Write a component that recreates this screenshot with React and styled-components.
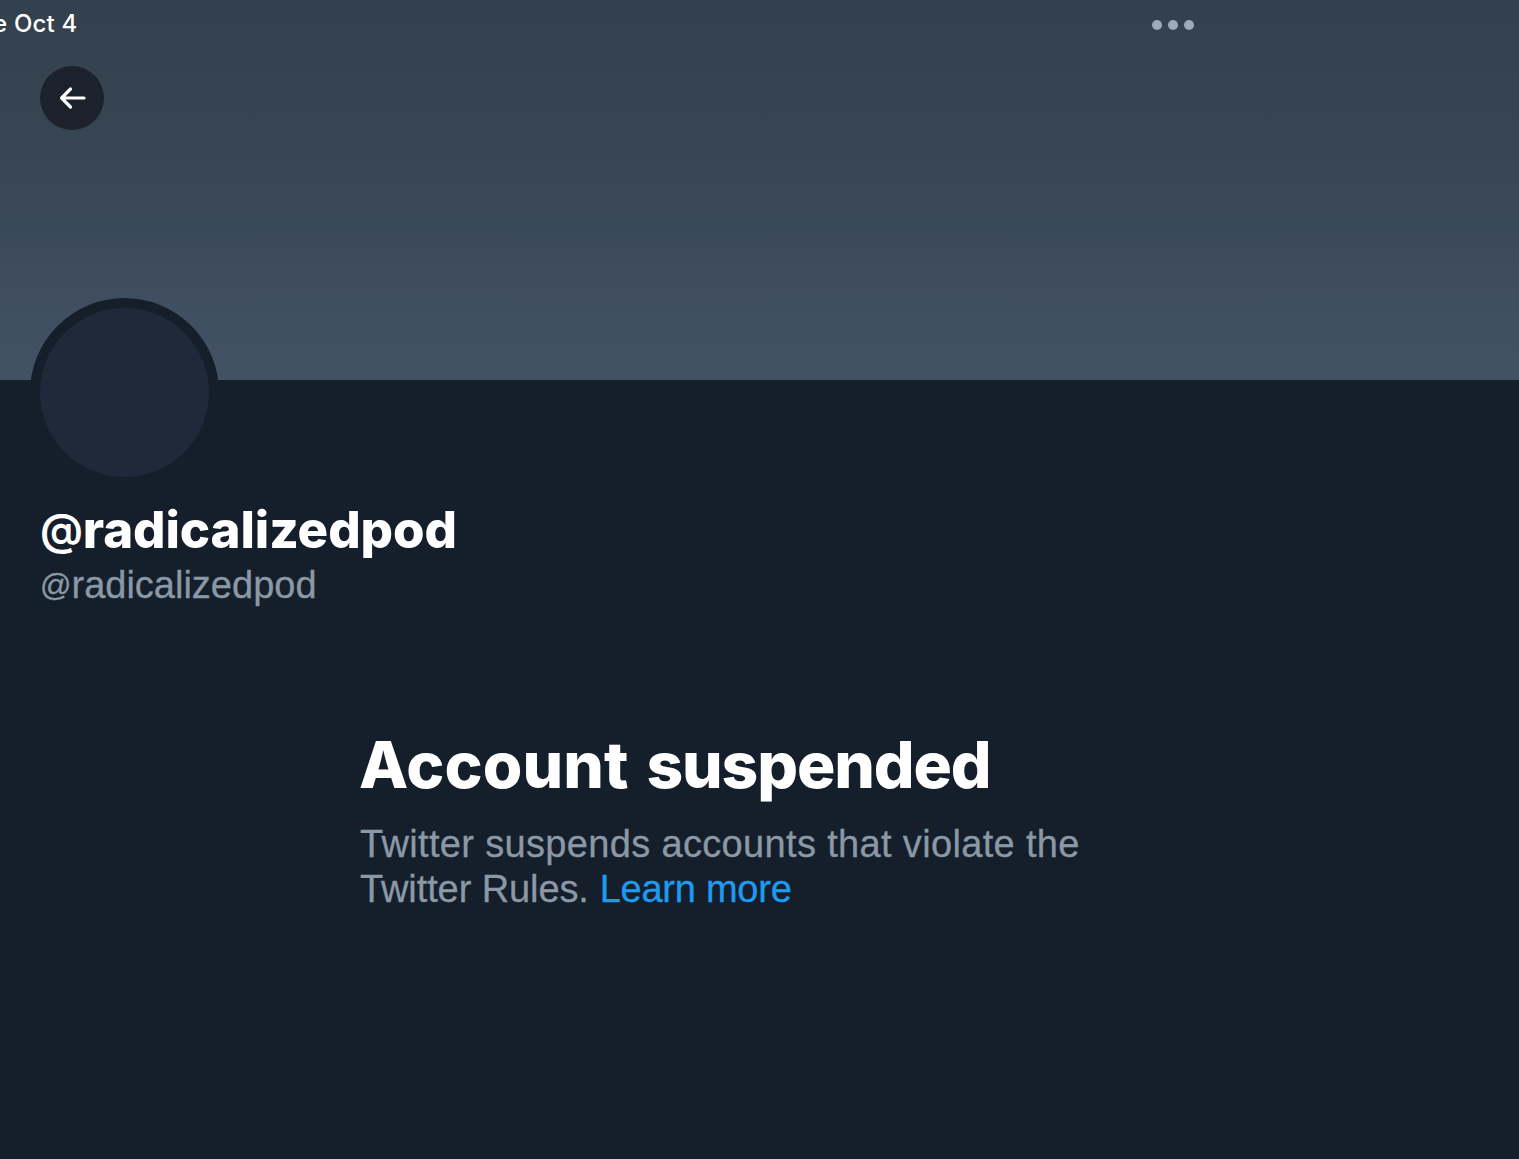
import React from "react";
import styled, { createGlobalStyle } from "styled-components";

const GlobalStyle = createGlobalStyle`
  * {
    box-sizing: border-box;
    margin: 0;
    padding: 0;
  }

  body {
    background: #151f2b;
    font-family: Inter, "Liberation Sans", sans-serif;
    overflow: hidden;
  }
`;

const Page = styled.main`
  height: 1159px;
  overflow: hidden;
  background: #151f2b;
  border-bottom: 2px solid #171c28;
`;

const Banner = styled.header`
  height: 380px;
  background: linear-gradient(180deg, #33404d 0%, #374552 33%, #3a4959 60%, #404e61 80%, #435164 100%);
`;

const StatusBar = styled.div`
  display: flex;
  align-items: center;
  justify-content: space-between;
  height: 50px;
  padding-right: 325px;
`;

const StatusDate = styled.span`
  display: flex;
  justify-content: flex-end;
  width: 77.5px;
  margin-top: -3px;
  font-size: 24px;
  font-weight: 500;
  line-height: 28px;
  letter-spacing: 0.2px;
  white-space: nowrap;
  color: #fff;
`;

const MultitaskDots = styled.div`
  display: flex;
  gap: 6px;
`;

const Dot = styled.span`
  width: 10px;
  height: 10px;
  border-radius: 50%;
  background: #9faab8;
`;

const BackButton = styled.button`
  display: flex;
  align-items: center;
  justify-content: center;
  width: 64px;
  height: 64px;
  margin: 16px 0 0 40px;
  border: none;
  border-radius: 50%;
  background: #1b222b;
  cursor: pointer;
`;

const Profile = styled.section`
  padding-left: 30px;
`;

const Avatar = styled.div`
  position: relative;
  width: 189px;
  height: 189px;
  margin-top: -82px;
  border: 10px solid #151f2b;
  border-radius: 50%;
  background: #151f2b;

  &::after {
    content: "";
    display: block;
    width: 169px;
    height: 169px;
    border-radius: 50%;
    background: #1e2a3a;
  }
`;

const DisplayName = styled.h1`
  height: 60px;
  margin: 13px 0 0 10px;
  font-size: 51px;
  font-weight: 800;
  line-height: 60px;
  letter-spacing: -0.1px;
  color: #fff;
`;

const Handle = styled.p`
  height: 46px;
  margin: 2px 0 0 10px;
  font-family: "Liberation Sans", Arial, sans-serif;
  font-size: 38px;
  line-height: 46px;
  letter-spacing: 0;
  -webkit-text-stroke: 0.3px;
  color: #8b98a5;
`;

const At = styled.span`
  vertical-align: ${(props) => props.$raise};
  font-size: ${(props) => props.$size};
  font-weight: ${(props) => props.$weight};
  line-height: 1;
`;

const Notice = styled.section`
  width: 800px;
  margin: 119px 0 0 359px;
`;

const NoticeTitle = styled.h2`
  font-size: 64px;
  font-weight: 800;
  line-height: 76px;
  word-spacing: 4px;
  white-space: nowrap;
  color: #fff;
`;

const Word = styled.span`
  letter-spacing: ${(props) => props.$tracking};
`;

const NoticeText = styled.p`
  margin: 19px 0 0 1px;
  font-family: "Liberation Sans", Arial, sans-serif;
  font-size: 38px;
  line-height: 45px;
  letter-spacing: 0.34px;
  -webkit-text-stroke: 0.3px;
  white-space: nowrap;
  color: #8b98a5;
`;

const Link = styled.a`
  letter-spacing: -0.25px;
  color: #1d9bf0;
  text-decoration: none;
`;

function BackArrow() {
  return (
    <svg width="28" height="24" viewBox="0 0 28 24" fill="none" stroke="#fff" strokeWidth="3.2" strokeLinecap="round" strokeLinejoin="round">
      <path d="M26 12H4M12.5 3L3.6 12l8.9 9" />
    </svg>
  );
}

export default function App() {
  return (
    <>
      <GlobalStyle />
      <Page>
        <Banner>
          <StatusBar>
            <StatusDate>e Oct 4</StatusDate>
            <MultitaskDots>
              <Dot />
              <Dot />
              <Dot />
            </MultitaskDots>
          </StatusBar>
          <BackButton aria-label="Back">
            <BackArrow />
          </BackButton>
        </Banner>
        <Profile>
          <Avatar />
          <DisplayName>
            <At $size="43px" $weight={600} $raise="3px">@</At>radicalizedpod
          </DisplayName>
          <Handle>
            <At $size="31px" $weight={400} $raise="2px">@</At>radicalizedpod
          </Handle>
        </Profile>
        <Notice>
          <NoticeTitle>
            <Word $tracking="0.1px">Account</Word> <Word $tracking="-1.1px">suspended</Word>
          </NoticeTitle>
          <NoticeText>
            Twitter suspends accounts that violate the
            <br />
            <Word $tracking="-0.1px">Twitter Rules.</Word> <Link href="#">Learn more</Link>
          </NoticeText>
        </Notice>
      </Page>
    </>
  );
}
